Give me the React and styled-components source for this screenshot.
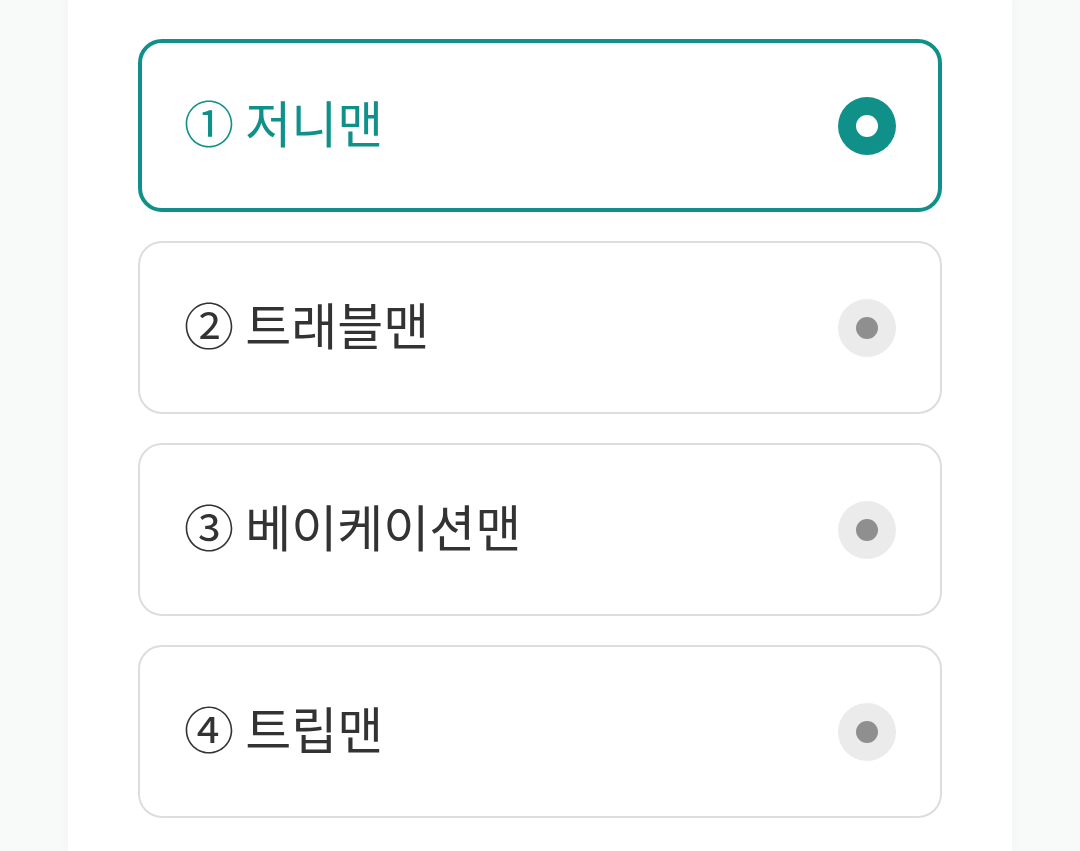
import React, { useState } from "react";
import styled, { createGlobalStyle } from "styled-components";

const GlobalStyle = createGlobalStyle`
  html, body {
    margin: 0;
    padding: 0;
    background: #f8f9f9;
    font-family: "Noto Sans CJK KR", "Noto Sans", sans-serif;
  }
`;

const options = ["① 저니맨", "② 트래블맨", "③ 베이케이션맨", "④ 트립맨"];

export default function App() {
  const [selected, setSelected] = useState(0);

  return (
    <>
      <GlobalStyle />
      <Page>
        <Panel>
          {options.map((label, i) => (
            <Option
              key={label}
              $active={selected === i}
              onClick={() => setSelected(i)}
            >
              <Label $active={selected === i}>{label}</Label>
              <Radio $active={selected === i} />
            </Option>
          ))}
        </Panel>
      </Page>
    </>
  );
}

const Page = styled.div`
  display: flex;
  justify-content: center;
  min-height: 851px;
`;

const Panel = styled.div`
  width: 944px;
  box-sizing: border-box;
  background: #ffffff;
  padding: 39px 70px 34px;
  box-shadow: 0 0 12px rgba(0, 0, 0, 0.03);
  display: flex;
  flex-direction: column;
  gap: 29px;
`;

/* border + padding keep the content at the same place in both states */
const Option = styled.div`
  height: 173px;
  box-sizing: border-box;
  border-radius: 24px;
  border: ${(p) => (p.$active ? "4px solid #0f9089" : "2px solid #dddddd")};
  padding: ${(p) => (p.$active ? "0 42px 0 42px" : "0 44px 0 44px")};
  display: flex;
  align-items: center;
  justify-content: space-between;
  cursor: pointer;
`;

const Label = styled.div`
  font-size: 50px;
  font-weight: 400;
  line-height: 1;
  color: ${(p) => (p.$active ? "#0f9089" : "#333333")};
  margin-top: -10px;
`;

const Radio = styled.div`
  width: 58px;
  height: 58px;
  border-radius: 50%;
  background: ${(p) => (p.$active ? "#0f9089" : "#ebebeb")};
  display: flex;
  align-items: center;
  justify-content: center;

  &::after {
    content: "";
    width: 22px;
    height: 22px;
    border-radius: 50%;
    background: ${(p) => (p.$active ? "#ffffff" : "#8f8f8f")};
  }
`;
